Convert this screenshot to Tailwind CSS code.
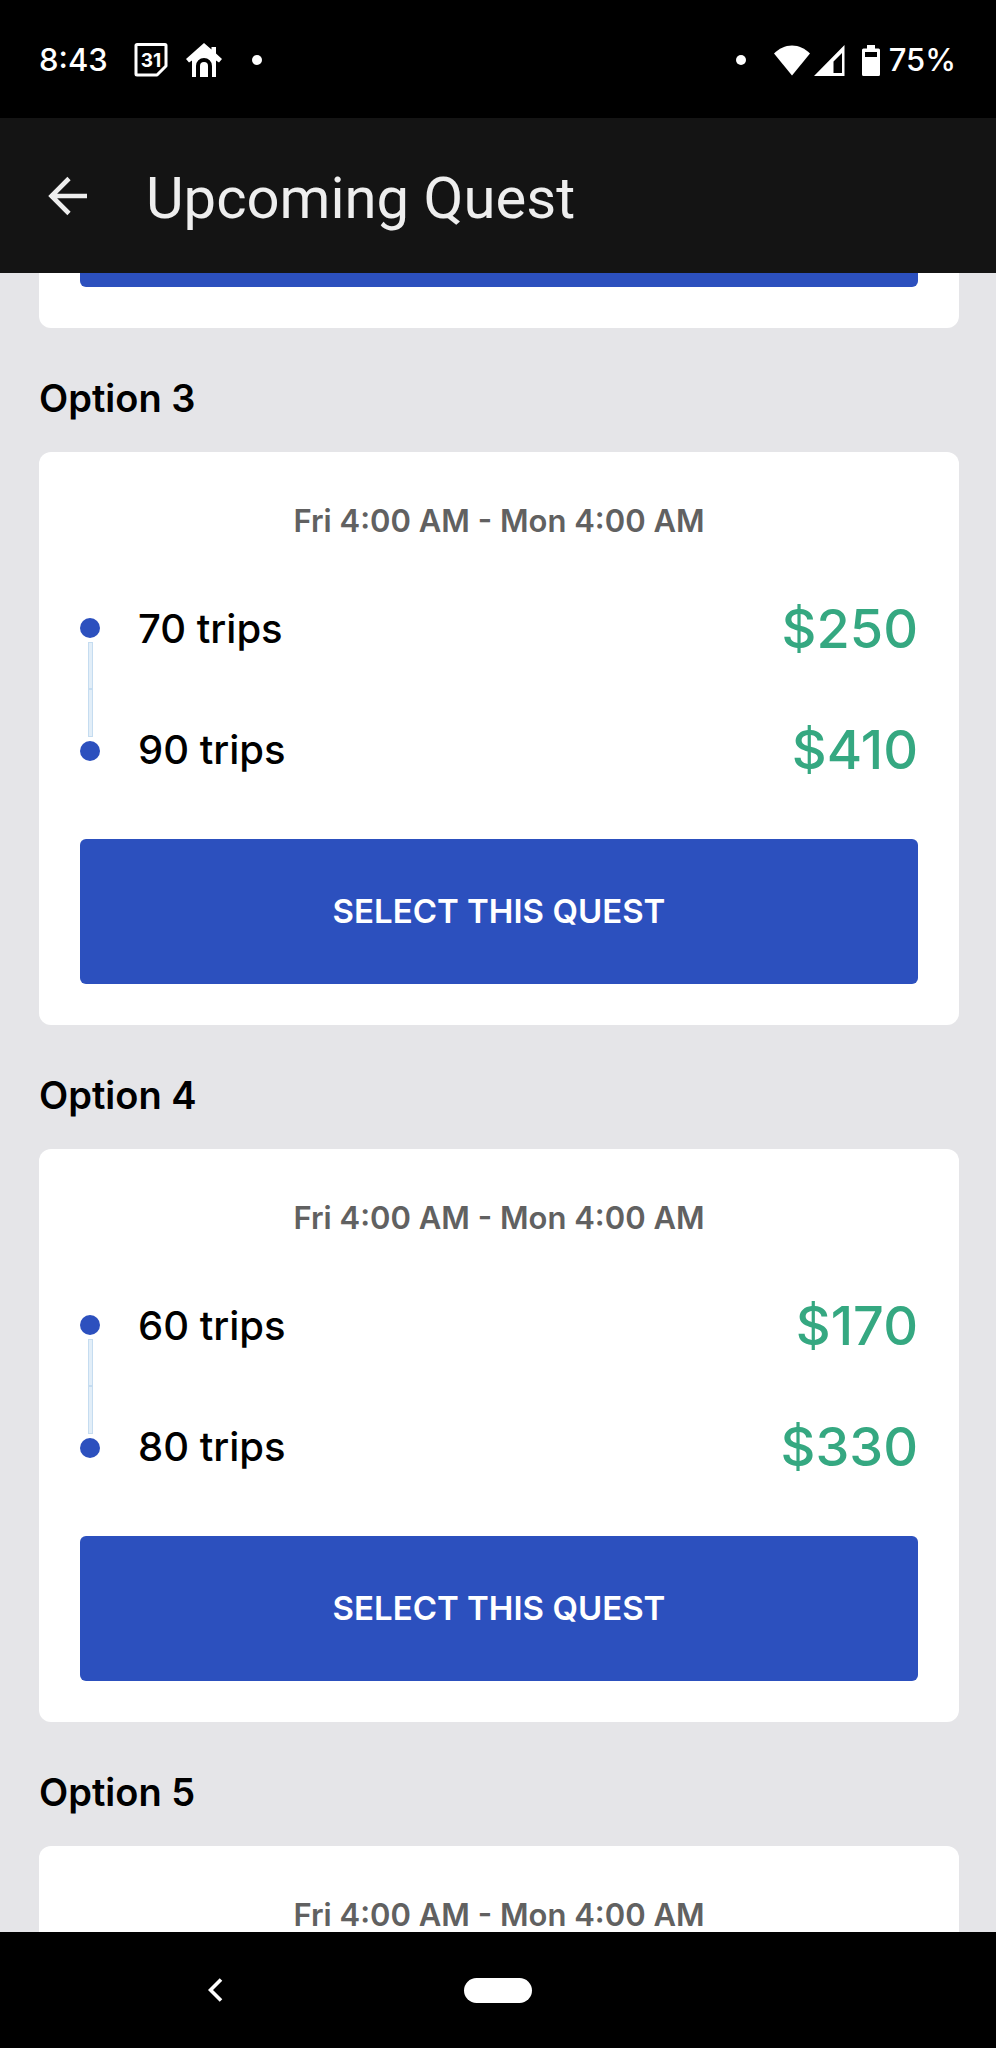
<!DOCTYPE html>
<html lang="en">
<head>
    <meta charset="UTF-8">
    <meta name="viewport" content="width=device-width, initial-scale=1.0">
    <title>Upcoming Quest</title>
    <script src="https://cdn.jsdelivr.net/npm/@tailwindcss/browser@4"></script>
</head>
<body class="h-screen flex flex-col overflow-hidden bg-[#e5e5e8] text-black font-['Inter','Liberation_Sans',sans-serif]">

    <!-- Status bar -->
    <div class="h-[118px] shrink-0 bg-black text-white flex items-center justify-between pt-0.5 pl-[39px] pr-10 text-[31px] font-medium">
        <div class="flex items-center">
            <span>8:43</span>
            <!-- Calendar -->
            <svg class="ml-[26px] w-[34px] h-[34px]" viewBox="0 0 34 34" fill="none" stroke="currentColor" aria-hidden="true">
                <path d="M3 1.500h28a1 1 0 0 1 1 1V23l-9 9H3a1 1 0 0 1-1-1V2.500a1 1 0 0 1 1-1z" stroke-width="3" stroke-linejoin="round"/>
                <path d="M32 23.500h-1.500L23 31v1z" fill="currentColor" stroke-width="1"/>
                <text x="17" y="24" text-anchor="middle" font-size="19" font-weight="700" fill="currentColor" stroke="none">31</text>
            </svg>
            <!-- Home -->
            <svg class="ml-[18px] w-9 h-[34px]" viewBox="0 0 36 34" fill="currentColor" aria-hidden="true">
                <path d="M18 0l7.500 6.500V4H30v6.500l6 5.500-3 3.500-3-2V34h-4V23a8 8 0 0 0-16 0v11H6V17.500l-3 2L0 16z"/>
                <path d="M14 34V23a4 4 0 0 1 8 0v11z"/>
            </svg>
            <span class="ml-[30px] size-[10px] rounded-full bg-white"></span>
        </div>
        <div class="flex items-center">
            <span class="size-[10px] rounded-full bg-white"></span>
            <!-- Wifi -->
            <svg class="ml-7 w-9 h-[31px]" viewBox="0 0 36 31" fill="currentColor" aria-hidden="true">
                <path d="M0 8.500C5 3.500 11 .5 18 .5s13 3 18 8L18 30.500z"/>
            </svg>
            <!-- Signal -->
            <svg class="ml-1 w-[31px] h-[31px]" viewBox="0 0 31 31" fill="currentColor" aria-hidden="true">
                <path fill-rule="evenodd" d="M30.500 0v31H0zM28 8L19.500 16.500V28H28z"/>
            </svg>
            <!-- Battery -->
            <svg class="ml-[17px] w-[18px] h-[31px]" viewBox="0 0 18 31" fill="currentColor" aria-hidden="true">
                <path fill-rule="evenodd" d="M5 0h8v3.500h3.500A1.500 1.500 0 0 1 18 5v24.500a1.500 1.500 0 0 1-1.500 1.500h-15A1.500 1.500 0 0 1 0 29.500V5a1.500 1.500 0 0 1 1.500-1.500H5zM3 7v5h12V7z"/>
            </svg>
            <span class="ml-[9px]">75%</span>
        </div>
    </div>

    <!-- App bar -->
    <header class="h-[155px] shrink-0 bg-[#141414] text-[#eeeeee] flex items-center pl-12">
        <button type="button" aria-label="Back">
            <svg class="block w-10 h-10" viewBox="0 0 40 40" fill="none" stroke="currentColor" stroke-width="4.600" aria-hidden="true">
                <path d="M39 20H4M21 2.500L3.500 20 21 37.500"/>
            </svg>
        </button>
        <h1 class="ml-[58px] pt-1 text-[58px] leading-[68px] font-['Roboto',sans-serif]">Upcoming Quest</h1>
    </header>

    <!-- Quest list -->
    <main class="flex-1 min-h-0 overflow-hidden pl-[39px] pr-[37px]">

        <!-- Option 2, end of card -->
        <section class="bg-white rounded-b-xl px-[41px] pb-[41px]">
            <button type="button" class="block w-full h-[14px] rounded-b-md bg-[#2c50be]" aria-label="Select this quest"></button>
        </section>

        <!-- Option 3 -->
        <h2 class="pt-[46px] pb-[30px] text-[38px] leading-[48px] font-semibold">Option 3</h2>
        <section class="bg-white rounded-xl px-[41px] pt-[49px] pb-[41px]">
            <p class="text-center text-[31px] leading-10 font-semibold text-[#616161]">Fri 4:00 AM - Mon 4:00 AM</p>
            <ul class="mt-[27px] mb-[29px]">
                <li class="flex items-center h-[121px]">
                    <div class="w-5 h-full flex flex-col items-center gap-1">
                        <span class="flex-1"></span>
                        <span class="size-5 rounded-full bg-[#2c50be]"></span>
                        <span class="flex-1 w-[5px] border border-[#c5dcf0] bg-[#e2eef8]"></span>
                    </div>
                    <span class="ml-[38px] flex-1 text-[40px] font-medium">70 trips</span>
                    <span class="text-[54px] font-medium text-[#35a881]">$250</span>
                </li>
                <li class="flex items-center h-[121px]">
                    <div class="w-5 h-full flex flex-col items-center gap-1">
                        <span class="flex-1 w-[5px] border border-[#c5dcf0] bg-[#e2eef8]"></span>
                        <span class="size-5 rounded-full bg-[#2c50be]"></span>
                        <span class="flex-1"></span>
                    </div>
                    <span class="ml-[38px] flex-1 text-[40px] font-medium">90 trips</span>
                    <span class="text-[54px] font-medium text-[#35a881]">$410</span>
                </li>
            </ul>
            <button type="button" class="block w-full h-[145px] rounded-md bg-[#2c50be] text-white text-[33px] font-semibold">SELECT THIS QUEST</button>
        </section>

        <!-- Option 4 -->
        <h2 class="pt-[46px] pb-[30px] text-[38px] leading-[48px] font-semibold">Option 4</h2>
        <section class="bg-white rounded-xl px-[41px] pt-[49px] pb-[41px]">
            <p class="text-center text-[31px] leading-10 font-semibold text-[#616161]">Fri 4:00 AM - Mon 4:00 AM</p>
            <ul class="mt-[27px] mb-[29px]">
                <li class="flex items-center h-[121px]">
                    <div class="w-5 h-full flex flex-col items-center gap-1">
                        <span class="flex-1"></span>
                        <span class="size-5 rounded-full bg-[#2c50be]"></span>
                        <span class="flex-1 w-[5px] border border-[#c5dcf0] bg-[#e2eef8]"></span>
                    </div>
                    <span class="ml-[38px] flex-1 text-[40px] font-medium">60 trips</span>
                    <span class="text-[54px] font-medium text-[#35a881]">$170</span>
                </li>
                <li class="flex items-center h-[121px]">
                    <div class="w-5 h-full flex flex-col items-center gap-1">
                        <span class="flex-1 w-[5px] border border-[#c5dcf0] bg-[#e2eef8]"></span>
                        <span class="size-5 rounded-full bg-[#2c50be]"></span>
                        <span class="flex-1"></span>
                    </div>
                    <span class="ml-[38px] flex-1 text-[40px] font-medium">80 trips</span>
                    <span class="text-[54px] font-medium text-[#35a881]">$330</span>
                </li>
            </ul>
            <button type="button" class="block w-full h-[145px] rounded-md bg-[#2c50be] text-white text-[33px] font-semibold">SELECT THIS QUEST</button>
        </section>

        <!-- Option 5 -->
        <h2 class="pt-[46px] pb-[30px] text-[38px] leading-[48px] font-semibold">Option 5</h2>
        <section class="bg-white rounded-t-xl px-[41px] pt-[49px] pb-[41px]">
            <p class="text-center text-[31px] leading-10 font-semibold text-[#616161]">Fri 4:00 AM - Mon 4:00 AM</p>
        </section>
    </main>

    <!-- System navigation -->
    <nav class="h-[116px] shrink-0 bg-black text-white grid grid-cols-[1fr_auto_1fr] items-center" aria-label="System">
        <div class="pl-52">
            <button type="button" class="block" aria-label="Go back">
                <svg class="block w-[15px] h-6" viewBox="0 0 15 24" fill="none" stroke="currentColor" stroke-width="3.600" aria-hidden="true">
                    <path d="M13 1.500L2.500 12 13 22.500"/>
                </svg>
            </button>
        </div>
        <button type="button" class="w-[68px] h-[25px] rounded-full bg-white" aria-label="Home"></button>
    </nav>

</body>
</html>
